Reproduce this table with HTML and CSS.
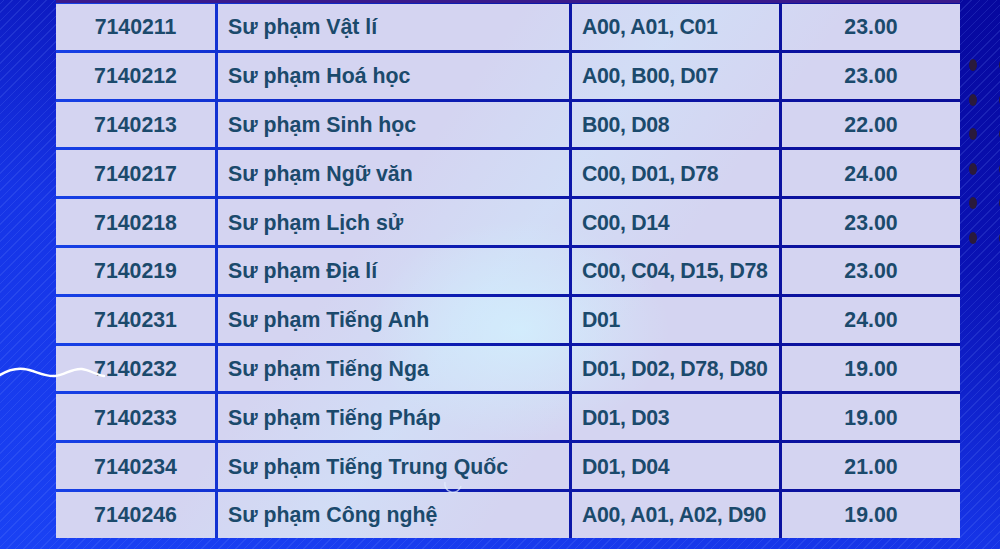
FILE: index.html
```html
<!DOCTYPE html>
<html lang="vi">
<head>
<meta charset="utf-8">
<title>Điểm chuẩn</title>
<link rel="stylesheet" href="styles.css">
</head>
<body>
<div class="stage">
  <div class="table">
    <div class="c code">7140211</div><div class="c name">Sư phạm Vật lí</div><div class="c grp">A00, A01, C01</div><div class="c score">23.00</div>
    <div class="c code">7140212</div><div class="c name">Sư phạm Hoá học</div><div class="c grp">A00, B00, D07</div><div class="c score">23.00</div>
    <div class="c code">7140213</div><div class="c name">Sư phạm Sinh học</div><div class="c grp">B00, D08</div><div class="c score">22.00</div>
    <div class="c code">7140217</div><div class="c name">Sư phạm Ngữ văn</div><div class="c grp">C00, D01, D78</div><div class="c score">24.00</div>
    <div class="c code">7140218</div><div class="c name">Sư phạm Lịch sử</div><div class="c grp">C00, D14</div><div class="c score">23.00</div>
    <div class="c code">7140219</div><div class="c name">Sư phạm Địa lí</div><div class="c grp">C00, C04, D15, D78</div><div class="c score">23.00</div>
    <div class="c code">7140231</div><div class="c name">Sư phạm Tiếng Anh</div><div class="c grp">D01</div><div class="c score">24.00</div>
    <div class="c code">7140232</div><div class="c name">Sư phạm Tiếng Nga</div><div class="c grp">D01, D02, D78, D80</div><div class="c score">19.00</div>
    <div class="c code">7140233</div><div class="c name">Sư phạm Tiếng Pháp</div><div class="c grp">D01, D03</div><div class="c score">19.00</div>
    <div class="c code">7140234</div><div class="c name">Sư phạm Tiếng Trung Quốc</div><div class="c grp">D01, D04</div><div class="c score">21.00</div>
    <div class="c code">7140246</div><div class="c name">Sư phạm Công nghệ</div><div class="c grp">A00, A01, A02, D90</div><div class="c score">19.00</div>
  </div>

  <div class="dots">
    <span></span><span></span><span></span><span></span><span></span><span></span>
    <span></span><span></span><span></span><span></span><span></span><span></span>
  </div>

  <svg class="wave" width="110" height="20" viewBox="0 0 110 20">
    <path d="M0 10 C 8 5, 15 3, 24 4 C 34 5, 44 12, 55 11 C 65 10, 72 3, 82 4 C 90 5, 96 10, 104 11" fill="none" stroke="#ffffff" stroke-width="2.4" stroke-linecap="round"/>
  </svg>
  <svg class="ring" width="22" height="22" viewBox="0 0 22 22">
    <path d="M3 8 A 8 8 0 0 0 19 12" fill="none" stroke="rgba(230,240,255,0.7)" stroke-width="1.5"/>
  </svg>
</div>
</body>
</html>
```

FILE: styles.css
```css
html, body {
  margin: 0;
  padding: 0;
}

body {
  width: 1000px;
  height: 549px;
  overflow: hidden;
  font-family: "Liberation Sans", Arial, sans-serif;
  background:
    repeating-linear-gradient(-45deg, rgba(120,150,255,0.16) 0 1px, rgba(0,0,0,0) 1px 6px),
    linear-gradient(200deg, #07089e 0%, #0a12b4 30%, #1634e6 60%, #1a42f4 100%);
}

.stage {
  position: relative;
  width: 1000px;
  height: 549px;
}

.table {
  margin-left: 56px;
  width: 904px;
  display: grid;
  grid-template-columns: 159px 351px 207px 178px;
  grid-auto-rows: 45.8px;
  gap: 3px;
  padding-top: 4px;
  background: linear-gradient(90deg, #1640e6 0%, #0f28c4 30%, #0c18aa 50%, #0a0e98 100%);
  box-shadow: inset 0 3px 0 #3a1a8c;
}

.c {
  color: #1b4a6c;
  font-weight: 700;
  font-size: 21.3px;
  display: flex;
  align-items: center;
  padding-top: 2px;
  box-sizing: border-box;
  white-space: nowrap;
  background:
    radial-gradient(ellipse 150px 110px at 520px 330px, rgba(210,242,255,0.75), rgba(210,242,255,0) 100%) fixed,
    linear-gradient(125deg, rgba(255,255,255,0) 38%, rgba(205,238,255,0.35) 50%, rgba(255,255,255,0) 62%) fixed,
    #d4d4f1;
}

.code, .score {
  justify-content: center;
}

.name {
  padding-left: 10px;
}

.grp {
  padding-left: 10px;
  letter-spacing: -0.35px;
}

.dots {
  position: absolute;
  left: 969px;
  top: 59px;
  display: grid;
  grid-template-columns: 8px 8px;
  grid-auto-flow: column;
  grid-template-rows: repeat(6, 12px);
  column-gap: 22px;
  row-gap: 22.6px;
}

.dots span {
  display: block;
  width: 8px;
  height: 12px;
  border-radius: 50%;
  background: #2a1a3c;
}

.wave {
  position: absolute;
  left: 0;
  top: 365px;
}

.ring {
  position: absolute;
  left: 442px;
  top: 474px;
}
```
